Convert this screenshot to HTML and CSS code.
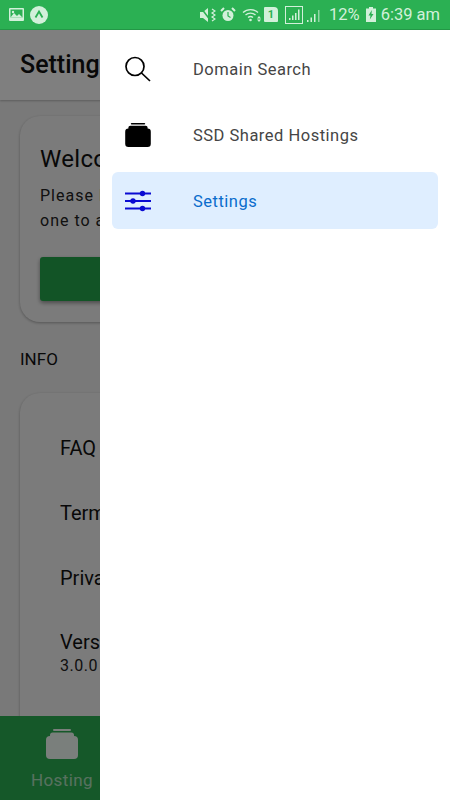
FILE: index.html
```
<!DOCTYPE html>
<html lang="en">
<head>
<meta charset="utf-8">
<title>Settings</title>
<link rel="stylesheet" href="styles.css">
</head>
<body>
<div class="phone">
  <div class="status">
    <div class="status-left">
      <svg class="st-img" width="15" height="13" viewBox="0 0 15 13"><rect width="15" height="13" rx="1" fill="#d2f0da"/><rect x="1.500" y="1.500" width="12" height="8" fill="#2bb053"/><path d="M1.500 9.500 5 5l3 3 2-2 3.500 3.500z" fill="#d2f0da"/><circle cx="4" cy="4" r="1.200" fill="#d2f0da"/></svg>
      <svg width="18" height="18" viewBox="0 0 18 18"><circle cx="9" cy="9" r="9" fill="#d2f0da"/><path d="M5.500 11.500 9 5.500l3.500 6" fill="none" stroke="#2bb053" stroke-width="1.800"/></svg>
    </div>
    <div class="status-right">
      <svg width="16" height="16" viewBox="0 0 16 16"><path d="M0 5h3l5-4v14l-5-4H0z" fill="#d2f0da"/><path d="M1 1l10 13" stroke="#2bb053" stroke-width="1.500"/><path d="M12 2l3 2-3 2 3 2-3 2 3 2-3 2" fill="none" stroke="#d2f0da" stroke-width="1.200"/></svg>
      <svg class="st-alarm" width="16" height="16" viewBox="0 0 16 16"><circle cx="8" cy="8.500" r="5.500" fill="#d2f0da"/><path d="M8 5v4l2.500 1.500" fill="none" stroke="#2bb053" stroke-width="1.200"/><path d="M1 4l3-3M15 4l-3-3" stroke="#d2f0da" stroke-width="2"/></svg>
      <svg class="st-wifi" width="21" height="16" viewBox="0 0 21 16"><path d="M1 5.500a11 11 0 0 1 15 0M3.500 8a7.500 7.500 0 0 1 10 0M6 10.500a4 4 0 0 1 5 0" fill="none" stroke="#d2f0da" stroke-width="1.300"/><circle cx="8.500" cy="13" r="1.300" fill="#d2f0da"/><path d="M17 9l2 2.500h-4zM17 15l2-2.500h-4z" fill="#d2f0da"/></svg>
      <span class="st-sim">1</span>
      <svg class="st-box" width="18" height="18" viewBox="0 0 18 18"><rect x=".5" y=".5" width="17" height="17" fill="none" stroke="#d2f0da"/><path d="M4 14h1.500v-2H4zM7 14h1.500V9.500H7zM10 14h1.500V7H10zM13 14h1.500V3.500H13z" fill="#d2f0da"/></svg>
      <svg width="16" height="16" viewBox="0 0 16 16"><path d="M1 15h1.500v-2H1zM4.500 15H6v-4.500H4.500zM8 15h1.500V7H8z" fill="#d2f0da"/><path d="M12 15h1.500V3H12z" fill="#8fd6a5"/></svg>
      <span class="st-text st-pct">12%</span>
      <svg class="st-batt" width="10" height="15" viewBox="0 0 10 15"><path d="M3 0h4v1.500h3V15H0V1.500h3z" fill="#d2f0da"/><path d="M5.800 3 2.500 8.500h2L3.800 12.500 7.500 7h-2z" fill="#2bb053"/></svg>
      <span class="st-text st-time">6:39 am</span>
    </div>
  </div>

  <div class="app">
    <header class="app-bar"><h1 class="app-title">Settings</h1></header>
    <main class="content">
      <section class="card welcome">
        <h2 class="welcome-title">Welcome</h2>
        <p class="welcome-text">Please log in<br>one to access</p>
        <div class="cta"></div>
      </section>
      <div class="section-label">INFO</div>
      <section class="card info">
        <div class="info-row">FAQ</div>
        <div class="info-row">Terms</div>
        <div class="info-row">Privacy</div>
        <div class="info-row version">Version<span class="version-num">3.0.0</span></div>
      </section>
    </main>
    <nav class="bottom-nav">
      <div class="tab">
        <svg class="tab-icon" width="32" height="30" viewBox="0 0 32 30"><use href="#stack"/></svg>
        <span class="tab-label">Hosting</span>
      </div>
    </nav>
    <div class="scrim"></div>
  </div>

  <aside class="drawer">
    <div class="menu-item">
      <svg class="menu-icon" width="26" height="26" viewBox="0 0 26 26"><circle cx="10" cy="10.500" r="9" fill="none" stroke="#000" stroke-width="1.700"/><path d="M16.500 17 25 25" stroke="#000" stroke-width="1.700"/></svg>
      <span class="menu-label">Domain Search</span>
    </div>
    <div class="menu-item">
      <svg class="menu-icon" width="26" height="24" viewBox="0 0 32 30"><use href="#stack"/></svg>
      <span class="menu-label">SSD Shared Hostings</span>
    </div>
    <div class="menu-item active">
      <svg class="menu-icon" width="26" height="22" viewBox="0 0 26 22"><path d="M0 3.500h26M0 11h26M0 18.500h26" stroke="#0a0ad2" stroke-width="2"/><circle cx="17.500" cy="3.500" r="2.700" fill="#0a0ad2"/><circle cx="8" cy="11" r="2.700" fill="#0a0ad2"/><circle cx="17.500" cy="18.500" r="2.700" fill="#0a0ad2"/></svg>
      <span class="menu-label">Settings</span>
    </div>
  </aside>
  <svg class="defs" width="0" height="0"><defs><g id="stack"><rect x="7" y="0" width="18" height="2" rx="1" fill="currentColor"/><path d="M4 6C4 4.500 5 3.500 6.500 3.500h19C27 3.500 28 4.500 28 6v2H4z" fill="currentColor"/><rect x="0" y="7" width="32" height="23" rx="4" fill="currentColor"/></g></defs></svg>
</div>
</body>
</html>
```

FILE: styles.css
```
* { box-sizing: border-box; }
html, body { margin: 0; padding: 0; }
body { font-family: Roboto, "Liberation Sans", sans-serif; background: #fff; }
.phone { position: relative; width: 450px; height: 800px; overflow: hidden; display: flex; flex-direction: column; }
.defs { position: absolute; }

.status { height: 30px; flex: none; background: #2bb053; border-bottom: 1px solid #249a48; display: flex; justify-content: space-between; align-items: center; padding: 0 10px 0 9px; }
.status-left { display: flex; align-items: center; gap: 6px; }
.status-right { display: flex; align-items: center; gap: 3px; color: #d2f0da; }
.st-text { font-size: 16.500px; line-height: 20px; white-space: nowrap; }
.st-pct { margin-left: 4px; }
.st-batt { margin-left: 3px; }
.st-time { margin-left: 2px; }
.st-alarm { margin-left: 1px; }
.st-wifi { margin-left: 3px; }
.st-sim { width: 14px; height: 15px; margin-left: -2px; background: #d2f0da; color: #2bb053; font-size: 11px; font-weight: 700; text-align: center; line-height: 15px; border-radius: 1px 4px 1px 1px; }
.st-box { margin-left: 4px; }

.app { flex: 1; min-height: 0; position: relative; display: flex; flex-direction: column; background: #f3f3f3; }
.app-bar { height: 70px; flex: none; background: #fff; box-shadow: 0 1px 2px rgba(0,0,0,.25); display: flex; align-items: center; padding: 0 20px; position: relative; }
.app-title { margin: 0; font-size: 25px; line-height: 32px; font-weight: 500; color: #111; white-space: nowrap; }
.content { flex: 1; min-height: 0; overflow: hidden; padding: 16px 20px 0; }
.card { background: #f7f7f7; border-radius: 20px; box-shadow: 0 1px 3px rgba(0,0,0,.3); }
.welcome { height: 206px; padding: 27px 20px 0; }
.welcome-title { margin: 0; font-size: 24px; line-height: 32px; font-weight: 400; color: #111; letter-spacing: .3px; }
.welcome-text { margin: 8px 0 0; font-size: 16px; line-height: 25px; color: #222; letter-spacing: 1px; }
.cta { height: 44px; margin-top: 24px; background: #25a84c; border-radius: 3px; box-shadow: 0 2px 4px rgba(0,0,0,.4); }
.section-label { margin-top: 28px; height: 18px; font-size: 17px; line-height: 18px; color: #111; }
.info { margin-top: 25px; height: 360px; padding: 34px 40px 0; }
.info-row { height: 65px; padding-top: 10px; font-size: 20px; line-height: 22px; color: #111; }
.version { display: flex; flex-direction: column; padding-top: 9px; }
.version-num { font-size: 16px; line-height: 22px; margin-top: 2px; letter-spacing: .5px; color: #222; }

.bottom-nav { position: absolute; left: 0; right: 0; bottom: 0; height: 84px; background: #2bb053; display: flex; }
.tab { width: 124px; display: flex; flex-direction: column; align-items: center; padding-top: 13px; color: #f5fff8; }
.tab-icon { display: block; }
.tab-label { margin-top: 11px; font-size: 17px; line-height: 20px; letter-spacing: .4px; opacity: .65; }
.scrim { position: absolute; inset: 0; background: rgba(0,0,0,.5); }

.drawer { position: absolute; top: 30px; left: 100px; right: 0; bottom: 0; background: #fff; padding: 10px 12px; display: flex; flex-direction: column; gap: 9px; }
.menu-item { height: 57px; display: flex; align-items: center; padding-left: 13px; border-radius: 6px; color: #000; }
.menu-icon { flex: none; }
.menu-label { margin-left: 42px; padding-top: 2px; font-size: 16.500px; line-height: 24px; letter-spacing: .5px; color: #454545; }
.active { background: #dfeeff; }
.active .menu-label { color: #0a6ccc; }
```
